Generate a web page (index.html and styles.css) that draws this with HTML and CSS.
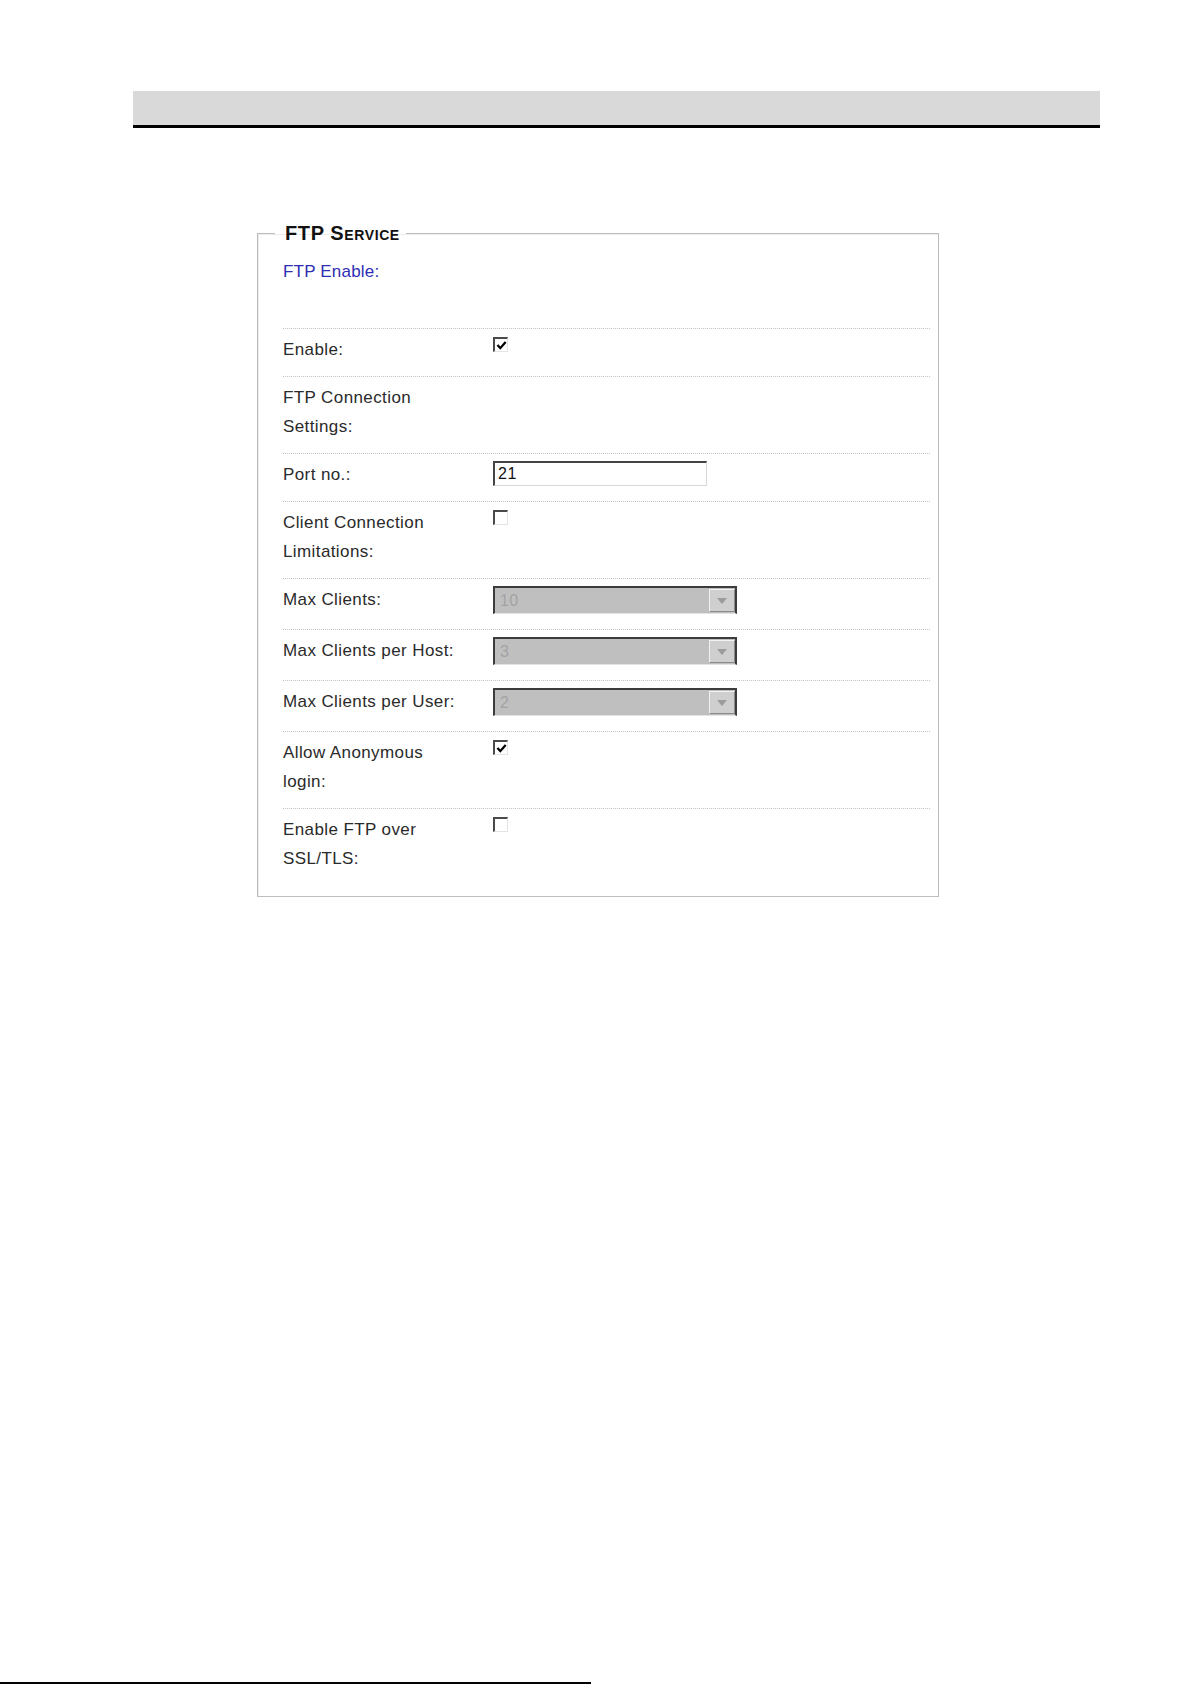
FILE: index.html
```html
<!DOCTYPE html>
<html lang="en">
<head>
<meta charset="utf-8">
<title>FTP Service</title>
<link rel="stylesheet" href="styles.css">
</head>
<body>
<div class="page">
  <div class="header-bar"></div>

  <fieldset class="panel">
    <legend class="panel-title">FTP Service</legend>

    <div class="section-head">FTP Enable:</div>

    <div class="row">
      <div class="label">Enable:</div>
      <div class="value"><span class="checkbox checked"><svg viewBox="0 0 10 10" width="11" height="11"><path d="M1.3 4.6 L3.9 7.4 L8.8 1.8" fill="none" stroke="#000" stroke-width="2.1"/></svg></span></div>
    </div>

    <div class="row">
      <div class="label">FTP Connection Settings:</div>
      <div class="value"></div>
    </div>

    <div class="row">
      <div class="label">Port no.:</div>
      <div class="value"><div class="textbox">21</div></div>
    </div>

    <div class="row">
      <div class="label">Client Connection Limitations:</div>
      <div class="value"><span class="checkbox"></span></div>
    </div>

    <div class="row">
      <div class="label">Max Clients:</div>
      <div class="value"><div class="select"><span class="select-value">10</span><span class="select-btn"><svg viewBox="0 0 10 6" width="10" height="6"><path d="M0 0 H10 L5 6 Z" fill="#9c9c9c"/></svg></span></div></div>
    </div>

    <div class="row">
      <div class="label">Max Clients per Host:</div>
      <div class="value"><div class="select"><span class="select-value">3</span><span class="select-btn"><svg viewBox="0 0 10 6" width="10" height="6"><path d="M0 0 H10 L5 6 Z" fill="#9c9c9c"/></svg></span></div></div>
    </div>

    <div class="row">
      <div class="label">Max Clients per User:</div>
      <div class="value"><div class="select"><span class="select-value">2</span><span class="select-btn"><svg viewBox="0 0 10 6" width="10" height="6"><path d="M0 0 H10 L5 6 Z" fill="#9c9c9c"/></svg></span></div></div>
    </div>

    <div class="row">
      <div class="label">Allow Anonymous login:</div>
      <div class="value"><span class="checkbox checked"><svg viewBox="0 0 10 10" width="11" height="11"><path d="M1.3 4.6 L3.9 7.4 L8.8 1.8" fill="none" stroke="#000" stroke-width="2.1"/></svg></span></div>
    </div>

    <div class="row">
      <div class="label">Enable FTP over SSL/TLS:</div>
      <div class="value"><span class="checkbox"></span></div>
    </div>
  </fieldset>

  <div class="footer-rule"></div>
</div>
</body>
</html>
```

FILE: styles.css
```css
html, body {
  margin: 0;
  padding: 0;
  background: #ffffff;
}

body {
  font-family: "Liberation Sans", Arial, sans-serif;
  color: #2a2a2a;
}

.page {
  min-height: 1685px;
  display: flex;
  flex-direction: column;
  padding-top: 91px;
  box-sizing: border-box;
}

.header-bar {
  margin-left: 133px;
  width: 967px;
  height: 34px;
  background: #d9d9d9;
  border-bottom: 3px solid #000;
}

.panel {
  margin: 97px 0 0 257px;
  width: 682px;
  box-sizing: border-box;
  padding: 0 8px 11px 25px;
  border: 1px solid #bdbdbd;
  box-shadow: inset 1px 1px 0 #ececec;
  min-width: 0;
}

.panel-title {
  margin-left: -8px;
  padding: 0 6px 0 10px;
  font-size: 20px;
  line-height: 16px;
  font-weight: bold;
  font-variant: small-caps;
  color: #111;
  letter-spacing: 0.6px;
}

.section-head {
  color: #2e2eb4;
  font-size: 17px;
  letter-spacing: 0.2px;
  line-height: 27px;
  padding: 17px 0 43px;
}

.row {
  display: grid;
  grid-template-columns: 180px 1fr;
  column-gap: 30px;
  border-top: 1px dotted #c4c4c4;
  padding: 6px 0 12px;
  font-size: 17px;
  letter-spacing: 0.4px;
  line-height: 29px;
}

.label {
  color: #2a2a2a;
}

.value {
  display: flex;
  align-items: flex-start;
}

.checkbox {
  margin-top: 2px;
  width: 15px;
  height: 15px;
  box-sizing: border-box;
  border-top: 2px solid #4a4a4a;
  border-left: 2px solid #4a4a4a;
  border-right: 1px solid #e4e4e4;
  border-bottom: 1px solid #e4e4e4;
  background: #fff;
  display: flex;
  align-items: center;
  justify-content: center;
}

.checkbox svg {
  display: block;
}

.textbox {
  margin-top: 1px;
  width: 214px;
  height: 25px;
  box-sizing: border-box;
  border-top: 2px solid #444;
  border-left: 2px solid #444;
  border-right: 1px solid #d8d8d8;
  border-bottom: 1px solid #d8d8d8;
  background: #fff;
  font-size: 16px;
  line-height: 22px;
  padding-left: 3px;
  color: #111;
  letter-spacing: 0.5px;
}

.select {
  margin: 1px 0 3px;
  width: 244px;
  height: 28px;
  box-sizing: border-box;
  border-top: 2px solid #3c3c3c;
  border-left: 2px solid #3c3c3c;
  border-right: 2px solid #3c3c3c;
  border-bottom: 1px solid #e2e2e2;
  background: #bfbfbf;
  display: flex;
  align-items: stretch;
}

.select-value {
  flex: 1;
  padding-left: 5px;
  font-size: 16px;
  line-height: 25px;
  color: #a3a3a3;
}

.select-btn {
  width: 26px;
  margin: 1px 0 1px;
  box-sizing: border-box;
  background: #cfcfcf;
  border-top: 1px solid #f2f2f2;
  border-left: 1px solid #f2f2f2;
  border-right: 1px solid #8a8a8a;
  border-bottom: 1px solid #8a8a8a;
  display: flex;
  align-items: center;
  justify-content: center;
}

.footer-rule {
  margin-top: auto;
  margin-bottom: 1px;
  width: 591px;
  height: 2px;
  background: #000;
}
```
